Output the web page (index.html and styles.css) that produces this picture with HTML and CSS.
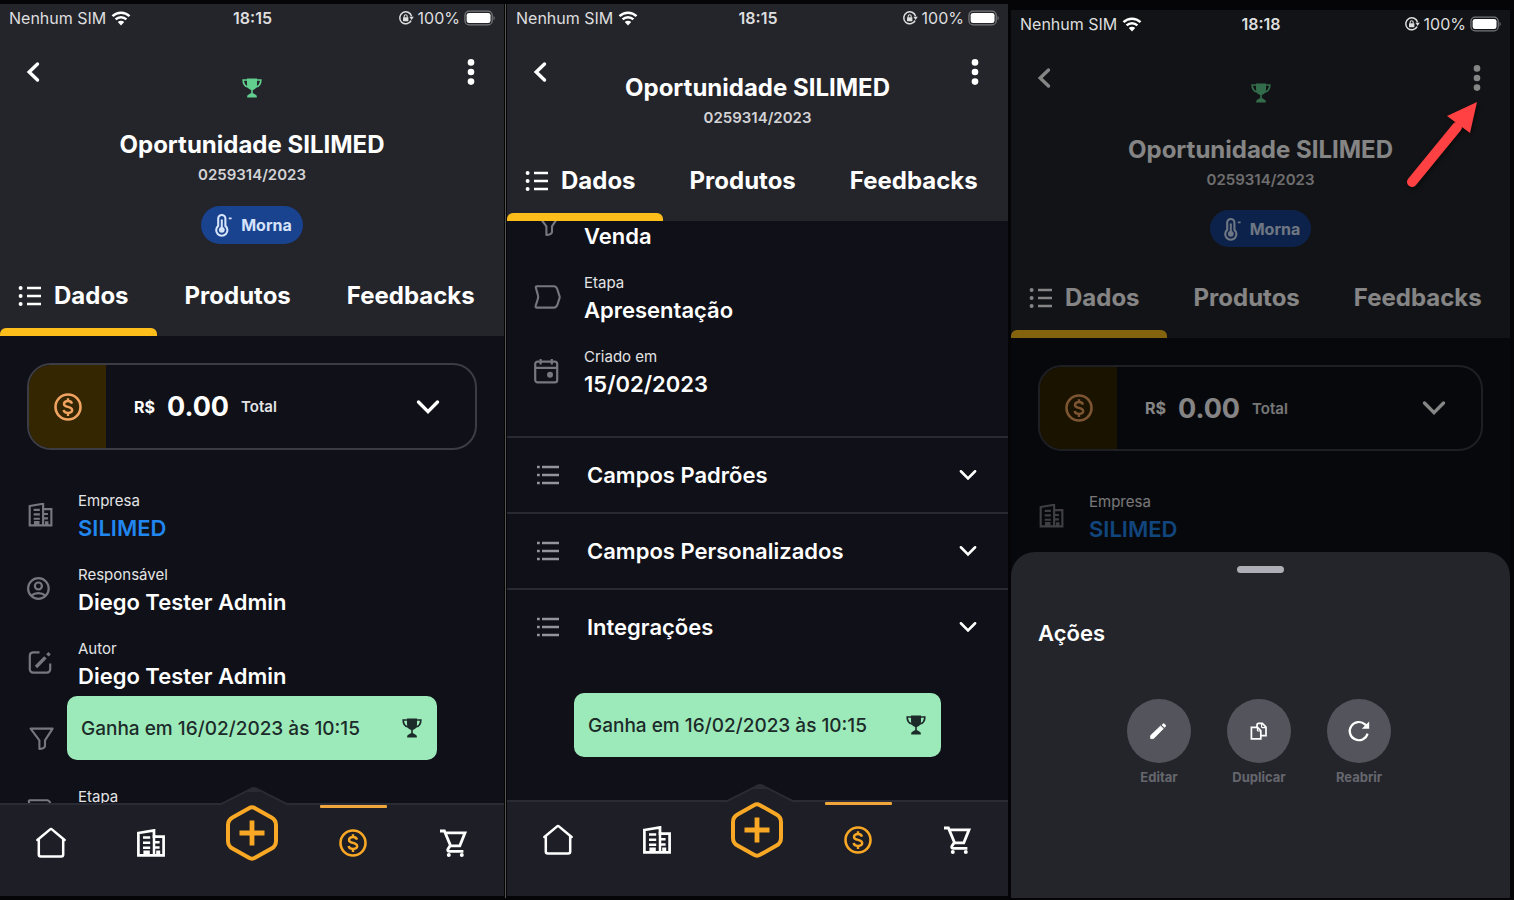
FILE: index.html
```html
<!DOCTYPE html>
<html lang="pt-BR">
<head>
<meta charset="utf-8">
<meta name="viewport" content="width=device-width, initial-scale=1">
<title>Oportunidade SILIMED</title>
<link rel="stylesheet" href="styles.css">
</head>
<body>
<svg class="sprite" aria-hidden="true">
  <symbol id="i-wifi" viewBox="0 0 20 16">
    <path d="M1.5 6.2a12.2 12.2 0 0 1 17 0M4.6 9.4a7.8 7.8 0 0 1 10.8 0" fill="none" stroke="currentColor" stroke-width="2.5"/>
    <path d="M10 15.4 6.8 12a4.6 4.6 0 0 1 6.4 0z" fill="currentColor"/>
  </symbol>
  <symbol id="i-lock" viewBox="0 0 16 16">
    <path d="M13.1 10.6A6 6 0 1 1 13.6 6.4" fill="none" stroke="currentColor" stroke-width="1.5"/>
    <path d="M11.4 6.8h4.4l-2.2 3.2z" fill="currentColor"/>
    <rect x="5" y="7.2" width="5.4" height="4" rx=".6" fill="currentColor"/>
    <path d="M6.2 7.4V6.2a1.500 1.500 0 0 1 3 0v1.200" fill="none" stroke="currentColor" stroke-width="1.100"/>
  </symbol>
  <symbol id="i-battery" viewBox="0 0 34 16">
    <rect x="1" y=".8" width="29" height="14.4" rx="4.4" fill="none" stroke="#77787c" stroke-width="1.3"/>
    <rect x="2.8" y="2.6" width="25.4" height="10.8" rx="2.6" fill="currentColor"/>
    <path d="M31.4 5.6c1.6.7 1.6 4.1 0 4.800z" fill="#77787c"/>
  </symbol>
  <symbol id="i-back" viewBox="0 0 16 22">
    <path d="M12.5 3 4.2 11l8.3 8" fill="none" stroke="currentColor" stroke-width="3.4" stroke-linecap="round"/>
  </symbol>
  <symbol id="i-dots" viewBox="0 0 8 28">
    <circle cx="4" cy="4.4" r="3.3" fill="currentColor"/><circle cx="4" cy="14" r="3.3" fill="currentColor"/><circle cx="4" cy="23.6" r="3.3" fill="currentColor"/>
  </symbol>
  <symbol id="i-trophy" viewBox="0 0 20 20">
    <path d="M5 .4h10v5.9c0 3.4-1.900 5.300-4.200 5.700v3.200c1.500.4 2.800 1.200 3.600 2.300h.4v2H5.200v-2h.4c.8-1.100 2.100-1.900 3.600-2.300V12C6.900 11.600 5 9.700 5 6.300z" fill="currentColor"/>
    <path d="M5.400 2H1.200c0 4.200 1.600 6.400 5 6.900M14.600 2h4.200c0 4.200-1.600 6.400-5 6.900" fill="none" stroke="currentColor" stroke-width="1.700"/>
  </symbol>
  <symbol id="i-thermo" viewBox="0 0 20 24">
    <path d="M5.200 12.900V5.600a3.600 3.600 0 0 1 7.200 0v7.300a5.600 5.600 0 1 1-7.200 0z" fill="none" stroke="currentColor" stroke-width="2.100"/>
    <circle cx="8.800" cy="16.800" r="2.900" fill="currentColor"/>
    <path d="M8.800 16V7.200" stroke="currentColor" stroke-width="2" stroke-linecap="round"/>
    <path d="M15.800 5.400h2.800" stroke="currentColor" stroke-width="1.800"/>
  </symbol>
  <symbol id="i-list" viewBox="0 0 24 22">
    <path d="M9 3h14M9 11h14M9 19h14" stroke="currentColor" stroke-width="2.700"/>
    <circle cx="2.600" cy="3" r="2" fill="currentColor"/><circle cx="2.600" cy="11" r="2" fill="currentColor"/><circle cx="2.600" cy="19" r="2" fill="currentColor"/>
  </symbol>
  <symbol id="i-rows" viewBox="0 0 24 22">
    <path d="M6 3h17M6 11h17M6 19h17" stroke="currentColor" stroke-width="2.600"/>
    <path d="M1 3h2.800M1 11h2.800M1 19h2.800" stroke="currentColor" stroke-width="2.600"/>
  </symbol>
  <symbol id="i-chevron" viewBox="0 0 24 16">
    <path d="m2.500 3 9.500 9.600L21.500 3" fill="none" stroke="currentColor" stroke-width="3.400" stroke-linecap="round"/>
  </symbol>
  <symbol id="i-coin" viewBox="0 0 28 28">
    <circle cx="14" cy="14" r="12.500" fill="none" stroke="currentColor" stroke-width="2.600"/>
    <path d="M18 10.600c-.5-1.700-2-2.600-4-2.600-2.300 0-4 1.100-4 2.900 0 4.200 8.200 1.900 8.200 6.200 0 1.800-1.800 2.900-4.200 2.900s-4-1-4.400-2.900M14 5.200v3M14 20v2.900" fill="none" stroke="currentColor" stroke-width="2.400"/>
  </symbol>
  <symbol id="i-building" viewBox="0 0 28 28">
    <path d="M1.400 4 17 1.400V7.600h9.600v18.800H1.400z" fill="none" stroke="currentColor" stroke-width="2.700"/>
    <path d="M17 6v20M6 8.400h7.200M6 13.700h7.200M6 18.800h7.200M18 13.200h4.600M18 18.400h4.600" stroke="currentColor" stroke-width="2.500"/>
    <path d="M6.400 26v-4.600h6.400V26M19.200 26v-4.400h4V26z" fill="currentColor"/>
  </symbol>
  <symbol id="i-office" viewBox="0 0 28 28">
    <g transform="translate(1.500 -.4) scale(.86)">
    <path d="M1.400 4 17 1.400V7.600h9.600v18.800H1.400z" fill="none" stroke="currentColor" stroke-width="2.500"/>
    <path d="M17 6v20M6 8.400h7.200M6 13.700h7.200M6 18.800h7.200M18 13.200h4.600M18 18.400h4.600" stroke="currentColor" stroke-width="2.500"/>
    <path d="M6.400 26v-4.600h6.400V26M19.200 26v-4.400h4V26z" fill="currentColor"/></g>
  </symbol>
  <symbol id="i-person" viewBox="0 0 28 28">
    <g fill="none" stroke="currentColor" stroke-width="2.200">
    <circle cx="11.400" cy="11.500" r="10.300"/><circle cx="11.400" cy="9" r="3.500"/><path d="M4.200 18.600c4.200-3.400 10.200-3.400 14.400 0"/></g>
  </symbol>
  <symbol id="i-edit" viewBox="0 0 28 28">
    <path d="M12.500 1.400H6A3.400 3.400 0 0 0 2.800 4.800v13.400a3.400 3.400 0 0 0 3.400 3.400h13.600a3.400 3.400 0 0 0 3.400-3.400v-5.600" fill="none" stroke="currentColor" stroke-width="2.200"/>
    <path d="m9 16 9.400-9.600M20.400 4.400l2.200-2.300" stroke="currentColor" stroke-width="3.400"/>
  </symbol>
  <symbol id="i-funnel" viewBox="0 0 28 28">
    <path d="M3.600 3.600h22L18 15.400V21c0 1.500-2.600 3-5.600 3v-8.600z" fill="none" stroke="currentColor" stroke-width="2.100" stroke-linejoin="round"/>
  </symbol>
  <symbol id="i-stage" viewBox="0 0 28 28">
    <path d="M3 1.200h17c2 0 2.600 1 3.200 2.800l2.400 7.400c.2.600.2.900 0 1.500l-2.200 6.800c-.7 2-1.600 2.900-3.400 2.900H3c-1.400 0-1.800-1-1.200-2.200l2-6.400c.6-1.800.6-2.600 0-4.400L2 3.300c-.4-1.300-.2-2.100 1-2.100z" fill="none" stroke="currentColor" stroke-width="2.100"/>
  </symbol>
  <symbol id="i-calendar" viewBox="0 0 28 28">
    <rect x="1.200" y="2.600" width="22" height="20.800" rx="2.400" fill="none" stroke="currentColor" stroke-width="2.200"/>
    <path d="M1.400 8.800H23M6.600-.2v5.600M17.800-.2v5.600" stroke="currentColor" stroke-width="2.200"/>
    <circle cx="16" cy="15.800" r="3" fill="currentColor"/>
  </symbol>
  <symbol id="i-home" viewBox="0 0 32 32">
    <path d="M3.400 13 15.800 2.600a1.800 1.800 0 0 1 2.400 0L30.600 13M4.800 12.600V27.600a2 2 0 0 0 2 2h20.400a2 2 0 0 0 2-2V12.600" fill="none" stroke="currentColor" stroke-width="2.500" stroke-linecap="round"/>
  </symbol>
  <symbol id="i-plus" viewBox="0 0 54 56">
    <path d="M24 3.200q3-1.700 6 0l16.500 9.200Q51 15 51 20v16q0 5-4.500 7.600L30 52.800q-3 1.700-6 0L7.500 43.600Q3 41 3 36V20q0-5 4.500-7.600z" fill="none" stroke="currentColor" stroke-width="4"/>
    <path d="M14.500 28h25M27 15.500v25" stroke="currentColor" stroke-width="4.800"/>
  </symbol>
  <symbol id="i-cart" viewBox="0 0 28 28">
    <path d="M0 2h4.400l6.200 14.800h9.200L25 3.800H5.400M10.400 16.400 8 20c-.8 1.400 0 2.400 1.400 2.400h14" fill="none" stroke="currentColor" stroke-width="2.800"/>
    <circle cx="8.800" cy="26" r="2" fill="currentColor"/><circle cx="21.800" cy="26" r="2" fill="currentColor"/>
  </symbol>
  <symbol id="i-hump" viewBox="0 0 70 20">
    <path d="M0 20 33 2.400q2-1 4 0L70 20z" fill="#1e1e26"/>
    <path d="M0 19 33 2.400q2-1 4 0L70 19" fill="none" stroke="#2a2b34" stroke-width="2"/>
    <path d="M28 6 35 2l7 4z" fill="#2a2b34"/>
  </symbol>
  <symbol id="i-pencil" viewBox="0 0 24 24">
    <path d="M3.600 16.600 13.600 7l2.700 2.700-9.700 9.900h-3z" fill="currentColor" stroke="currentColor" stroke-width=".8" stroke-linejoin="round"/>
    <path d="m14.600 6 1.300-1.300q.8-.7 1.600 0l1.200 1.200q.7.800 0 1.600L17.400 8.800z" fill="currentColor"/>
  </symbol>
  <symbol id="i-copy" viewBox="0 0 24 24">
    <path d="M4.400 8.400h6.200l3.200 3.200v8.200H4.400zM10 8V6.200q0-1.800 1.600-1.800h3.800l3.600 3.800v8.400h-4.600" fill="none" stroke="currentColor" stroke-width="1.700"/>
    <path d="M14.600 4.400v3.400q0 .8.800.8h3.200M10.400 8.800v2.400q0 .8.800.8h2.400" fill="none" stroke="currentColor" stroke-width="1.200"/>
  </symbol>
  <symbol id="i-redo" viewBox="0 0 24 24">
    <path d="M20.600 14.600A9.100 9.100 0 1 1 18 5.400L20 7.400" fill="none" stroke="currentColor" stroke-width="2.200"/>
    <path d="M22.200 2.400v7.400h-7.400z" fill="currentColor"/>
  </symbol>
</svg>

<div class="board">
  <section class="phone phone-first" aria-label="Dados da oportunidade">
    <header class="header">
      <div class="status">
        <span class="carrier">Nenhum SIM <svg class="wifi"><use href="#i-wifi"/></svg></span>
        <span class="clock">18:15</span>
        <span class="power"><svg class="lock"><use href="#i-lock"/></svg>100%<svg class="battery"><use href="#i-battery"/></svg></span>
      </div>
      <div class="topbar">
        <button class="icon-button" type="button" aria-label="Voltar"><svg class="back"><use href="#i-back"/></svg></button>
        <div class="summary">
          <svg class="trophy"><use href="#i-trophy"/></svg>
          <h1 class="title">Oportunidade SILIMED</h1>
          <p class="number">0259314/2023</p>
          <span class="pill"><svg class="thermo"><use href="#i-thermo"/></svg>Morna</span>
        </div>
        <button class="icon-button" type="button" aria-label="Mais"><svg class="dots"><use href="#i-dots"/></svg></button>
      </div>
      <nav class="tabs">
        <button class="tab tab-active" type="button"><svg class="list"><use href="#i-list"/></svg>Dados</button>
        <button class="tab" type="button">Produtos</button>
        <button class="tab" type="button">Feedbacks</button>
      </nav>
    </header>
    <div class="main">
      <button class="total" type="button">
        <span class="total-icon"><svg class="coin"><use href="#i-coin"/></svg></span>
        <span class="currency">R$</span><span class="amount">0.00</span><span class="caption">Total</span>
        <svg class="total-chevron"><use href="#i-chevron"/></svg>
      </button>
      <div class="fields">
        <div class="field"><svg class="field-icon"><use href="#i-office"/></svg><div><p class="label">Empresa</p><a class="value value-link" href="#">SILIMED</a></div></div>
        <div class="field"><svg class="field-icon"><use href="#i-person"/></svg><div><p class="label">Responsável</p><p class="value">Diego Tester Admin</p></div></div>
        <div class="field"><svg class="field-icon"><use href="#i-edit"/></svg><div><p class="label">Autor</p><p class="value">Diego Tester Admin</p></div></div>
        <div class="field"><svg class="field-icon"><use href="#i-funnel"/></svg></div>
        <div class="field"><svg class="field-icon"><use href="#i-stage"/></svg><p class="label">Etapa</p></div>
      </div>
    </div>
    <footer class="dock">
      <div class="toast" role="status">Ganha em 16/02/2023 às 10:15<svg class="trophy"><use href="#i-trophy"/></svg></div>
      <nav class="navbar">
        <svg class="hump"><use href="#i-hump"/></svg>
        <button class="nav-item" type="button" aria-label="Início"><svg class="home"><use href="#i-home"/></svg></button>
        <button class="nav-item" type="button" aria-label="Empresas"><svg class="coin"><use href="#i-building"/></svg></button>
        <button class="nav-item nav-add" type="button" aria-label="Adicionar"><svg class="plus"><use href="#i-plus"/></svg></button>
        <button class="nav-item nav-active" type="button" aria-label="Oportunidades"><svg class="coin"><use href="#i-coin"/></svg></button>
        <button class="nav-item" type="button" aria-label="Vendas"><svg class="coin"><use href="#i-cart"/></svg></button>
      </nav>
    </footer>
  </section>

  <div class="divider"></div>

  <section class="phone phone-second" aria-label="Dados, continuação">
    <header class="header">
      <div class="status">
        <span class="carrier">Nenhum SIM <svg class="wifi"><use href="#i-wifi"/></svg></span>
        <span class="clock">18:15</span>
        <span class="power"><svg class="lock"><use href="#i-lock"/></svg>100%<svg class="battery"><use href="#i-battery"/></svg></span>
      </div>
      <div class="topbar">
        <button class="icon-button" type="button" aria-label="Voltar"><svg class="back"><use href="#i-back"/></svg></button>
        <div class="summary summary-compact">
          <h1 class="title">Oportunidade SILIMED</h1>
          <p class="number">0259314/2023</p>
        </div>
        <button class="icon-button" type="button" aria-label="Mais"><svg class="dots"><use href="#i-dots"/></svg></button>
      </div>
      <nav class="tabs">
        <button class="tab tab-active" type="button"><svg class="list"><use href="#i-list"/></svg>Dados</button>
        <button class="tab" type="button">Produtos</button>
        <button class="tab" type="button">Feedbacks</button>
      </nav>
    </header>
    <div class="main main-scrolled">
      <div class="fields">
        <div class="field"><svg class="field-icon"><use href="#i-funnel"/></svg><p class="value value-low">Venda</p></div>
        <div class="field"><svg class="field-icon"><use href="#i-stage"/></svg><div><p class="label">Etapa</p><p class="value">Apresentação</p></div></div>
        <div class="field"><svg class="field-icon"><use href="#i-calendar"/></svg><div><p class="label">Criado em</p><p class="value">15/02/2023</p></div></div>
      </div>
      <div class="groups">
        <button class="group" type="button"><svg class="list"><use href="#i-rows"/></svg>Campos Padrões<svg class="group-chevron"><use href="#i-chevron"/></svg></button>
        <button class="group" type="button"><svg class="list"><use href="#i-rows"/></svg>Campos Personalizados<svg class="group-chevron"><use href="#i-chevron"/></svg></button>
        <button class="group" type="button"><svg class="list"><use href="#i-rows"/></svg>Integrações<svg class="group-chevron"><use href="#i-chevron"/></svg></button>
      </div>
    </div>
    <footer class="dock">
      <div class="toast" role="status">Ganha em 16/02/2023 às 10:15<svg class="trophy"><use href="#i-trophy"/></svg></div>
      <nav class="navbar">
        <svg class="hump"><use href="#i-hump"/></svg>
        <button class="nav-item" type="button" aria-label="Início"><svg class="home"><use href="#i-home"/></svg></button>
        <button class="nav-item" type="button" aria-label="Empresas"><svg class="coin"><use href="#i-building"/></svg></button>
        <button class="nav-item nav-add" type="button" aria-label="Adicionar"><svg class="plus"><use href="#i-plus"/></svg></button>
        <button class="nav-item nav-active" type="button" aria-label="Oportunidades"><svg class="coin"><use href="#i-coin"/></svg></button>
        <button class="nav-item" type="button" aria-label="Vendas"><svg class="coin"><use href="#i-cart"/></svg></button>
      </nav>
    </footer>
  </section>

  <section class="phone phone-third" aria-label="Ações da oportunidade">
    <header class="header">
      <div class="status">
        <span class="carrier">Nenhum SIM <svg class="wifi"><use href="#i-wifi"/></svg></span>
        <span class="clock">18:18</span>
        <span class="power"><svg class="lock"><use href="#i-lock"/></svg>100%<svg class="battery"><use href="#i-battery"/></svg></span>
      </div>
      <div class="topbar">
        <button class="icon-button" type="button" aria-label="Voltar"><svg class="back"><use href="#i-back"/></svg></button>
        <div class="summary">
          <svg class="trophy"><use href="#i-trophy"/></svg>
          <h1 class="title">Oportunidade SILIMED</h1>
          <p class="number">0259314/2023</p>
          <span class="pill"><svg class="thermo"><use href="#i-thermo"/></svg>Morna</span>
        </div>
        <button class="icon-button" type="button" aria-label="Mais"><svg class="dots"><use href="#i-dots"/></svg></button>
      </div>
      <nav class="tabs">
        <button class="tab tab-active" type="button"><svg class="list"><use href="#i-list"/></svg>Dados</button>
        <button class="tab" type="button">Produtos</button>
        <button class="tab" type="button">Feedbacks</button>
      </nav>
    </header>
    <div class="main">
      <button class="total" type="button">
        <span class="total-icon"><svg class="coin"><use href="#i-coin"/></svg></span>
        <span class="currency">R$</span><span class="amount">0.00</span><span class="caption">Total</span>
        <svg class="total-chevron"><use href="#i-chevron"/></svg>
      </button>
      <div class="fields">
        <div class="field"><svg class="field-icon"><use href="#i-office"/></svg><div><p class="label">Empresa</p><a class="value value-link" href="#">SILIMED</a></div></div>
      </div>
    </div>
    <div class="scrim"></div>
    <div class="sheet" role="dialog" aria-labelledby="sheet-title">
      <div class="handle"></div>
      <h2 class="sheet-title" id="sheet-title">Ações</h2>
      <div class="actions">
        <button class="action" type="button"><span class="action-disc"><svg class="glyph"><use href="#i-pencil"/></svg></span>Editar</button>
        <button class="action" type="button"><span class="action-disc"><svg class="glyph"><use href="#i-copy"/></svg></span>Duplicar</button>
        <button class="action" type="button"><span class="action-disc"><svg class="glyph"><use href="#i-redo"/></svg></span>Reabrir</button>
      </div>
    </div>
    <svg class="arrow" viewBox="0 0 76 92" aria-hidden="true">
      <path d="M7 84 52 29" stroke="#ff4144" stroke-width="10" stroke-linecap="round"/>
      <path d="M72 4 42 18l23 17z" fill="#ff4144"/>
    </svg>
  </section>
</div>
</body>
</html>
```

FILE: styles.css
```css
* {
  box-sizing: border-box;
}

body {
  margin: 0;
  background: #050507;
  color: #fff;
  font-family: Inter, "Liberation Sans", sans-serif;
}

h1, h2, p {
  margin: 0;
}

button {
  margin: 0;
  padding: 0;
  border: 0;
  background: none;
  color: inherit;
  font: inherit;
  text-align: left;
}

.sprite {
  display: none;
}

svg {
  display: block;
  flex: none;
}

.board {
  display: flex;
  min-height: 100vh;
  padding: 4px 4px 2px 0;
}

.divider {
  width: 1px;
  margin: 0 1px;
  background: #55564f;
}

.phone {
  position: relative;
  display: flex;
  flex-direction: column;
  min-width: 0;
  margin-bottom: 2px;
  overflow: hidden;
  background: #0f1018;
}

.phone-first {
  flex: 504 1 0;
}

.phone-second {
  flex: 501 1 0;
}

.phone-third {
  flex: 499 1 0;
  margin: 6px 0 0 3px;
}

/* Header */

.header {
  background: #24252b;
}

.status {
  display: grid;
  grid-template-columns: 1fr auto 1fr;
  align-items: center;
  height: 28px;
  padding: 0 8px 0 9px;
  color: #dededf;
  font-size: 16px;
  line-height: 20px;
}

.carrier,
.power {
  display: flex;
  align-items: center;
  gap: 5px;
}

.power {
  justify-content: flex-end;
  gap: 4px;
}

.clock {
  font-weight: 600;
}

.wifi {
  width: 20px;
  height: 16px;
  color: #fff;
}

.lock {
  width: 16px;
  height: 16px;
}

.battery {
  width: 32px;
  height: 16px;
  color: #fff;
}

.topbar {
  display: grid;
  grid-template-columns: 66px 1fr 66px;
  align-items: start;
  padding: 18px 0 15px;
}

.phone-second .topbar {
  padding-bottom: 16px;
}

.icon-button {
  display: flex;
  align-items: center;
  justify-content: center;
  height: 44px;
}

.back {
  width: 16px;
  height: 22px;
}

.dots {
  width: 8px;
  height: 28px;
}

.summary {
  display: flex;
  flex-direction: column;
  align-items: center;
  padding-top: 28px;
}

.trophy {
  width: 20px;
  height: 20px;
}

.summary .trophy {
  margin-bottom: 31px;
  color: #62cf8e;
}

.summary-compact {
  padding-top: 22px;
}

.title {
  font-size: 24px;
  font-weight: 700;
  line-height: 32px;
  white-space: nowrap;
}

.number {
  margin-top: 4px;
  color: #d3d3d5;
  font-size: 15px;
  font-weight: 600;
  line-height: 20px;
}

.pill {
  display: flex;
  align-items: center;
  gap: 8px;
  height: 38px;
  margin-top: 21px;
  padding: 0 11px 0 12px;
  border-radius: 19px;
  background: #19428f;
  color: #d5e3fb;
  font-size: 16px;
  font-weight: 700;
}

.thermo {
  width: 20px;
  height: 24px;
}

.tabs {
  display: flex;
  height: 77px;
}

.tab {
  position: relative;
  display: flex;
  align-items: center;
  gap: 12px;
  padding: 0 27px 4px;
  font-size: 24px;
  font-weight: 700;
  line-height: 32px;
}

.phone-first .tab {
  padding-right: 28px;
  padding-left: 28px;
}

.phone-first .tab-active,
.tab-active {
  padding-left: 18px;
}

.tab-active::after {
  position: absolute;
  right: 0;
  bottom: 0;
  left: 0;
  height: 8px;
  border-radius: 6px 6px 0 0;
  background: #fdbe1b;
  content: "";
}

.list {
  width: 24px;
  height: 22px;
}

/* Content */

.main {
  flex: 1 1 0;
  min-height: 0;
  padding-top: 27px;
  overflow: hidden;
}

.main-scrolled {
  padding-top: 0;
}

.main-scrolled .fields {
  margin-top: -22px;
}

.total {
  display: flex;
  align-items: center;
  width: calc(100% - 54px);
  height: 86px;
  margin: 0 27px 41px;
  overflow: hidden;
  border: 2px solid #3b3c44;
  border-radius: 24px;
}

.phone-first .total {
  height: 87px;
}

.total-icon {
  display: flex;
  align-items: center;
  justify-content: center;
  align-self: stretch;
  width: 77px;
  margin-right: 28px;
  background: #332601;
  color: #f1a462;
}

.coin {
  width: 28px;
  height: 28px;
}

.currency {
  font-size: 16px;
  font-weight: 700;
}

.amount {
  margin: 0 12px;
  font-size: 27px;
  font-weight: 700;
}

.caption {
  color: #e4e4e6;
  font-size: 15px;
  font-weight: 600;
}

.total-chevron {
  width: 24px;
  height: 16px;
  margin: 0 35px 0 auto;
}

.fields {
  display: grid;
  gap: 23px;
  padding: 0 27px;
}

.field {
  display: grid;
  grid-template-columns: 28px 1fr;
  gap: 22px;
  height: 51px;
}

.phone-first .field,
.phone-third .field {
  gap: 23px;
}

.field-icon {
  align-self: center;
  width: 28px;
  height: 28px;
  color: #777780;
}

.label {
  color: #e4e4e6;
  font-size: 15px;
  line-height: 20px;
}

.value {
  display: block;
  margin-top: 3px;
  font-size: 22px;
  font-weight: 600;
  line-height: 28px;
}

.value-low {
  align-self: end;
}

.value-link {
  color: #2186ee;
  text-decoration: none;
}

.groups {
  margin-top: 38px;
}

.group {
  display: flex;
  align-items: center;
  gap: 27px;
  width: 100%;
  height: 76px;
  padding: 0 31px 0 29px;
  border-top: 2px solid #282932;
  font-size: 22px;
  font-weight: 600;
  line-height: 28px;
}

.group .list {
  color: #94949b;
}

.group-chevron {
  width: 18px;
  height: 12px;
  margin-left: auto;
}

/* Bottom bar */

.dock {
  position: relative;
}

.toast {
  position: absolute;
  right: 67px;
  bottom: calc(100% + 44px);
  left: 67px;
  display: flex;
  align-items: center;
  justify-content: space-between;
  height: 64px;
  padding: 0 15px 0 14px;
  border-radius: 10px;
  background: #9ceaba;
  color: #1c2a29;
  font-size: 19px;
  font-weight: 500;
}

.navbar {
  display: grid;
  grid-template-columns: repeat(5, 1fr);
  align-items: start;
  height: 92px;
  background: #1e1e26;
  box-shadow: 0 -1px 0 #2a2b34, inset 0 1px 0 #2a2b34;
}

.phone-second .navbar {
  height: 95px;
}

.hump {
  position: absolute;
  bottom: calc(100% - 2px);
  left: calc(50% - 33px);
  width: 70px;
  height: 20px;
}

.nav-item {
  position: relative;
  display: flex;
  align-items: center;
  justify-content: center;
  height: 78px;
}

.nav-add {
  align-items: flex-start;
  padding-top: 1px;
}

.nav-add,
.nav-active {
  color: #f9a825;
}

.nav-active::before {
  position: absolute;
  top: 1px;
  left: calc(50% - 33px);
  width: 67px;
  height: 3px;
  border-radius: 1px;
  background: #f0a63a;
  content: "";
}

.home {
  width: 32px;
  height: 32px;
}

.plus {
  width: 54px;
  height: 56px;
}

/* Action sheet */

.phone-third .summary {
  padding-top: 27px;
}

.phone-third .topbar {
  padding-bottom: 14px;
}

.phone-third .pill {
  height: 37px;
  margin-top: 20px;
}

.phone-third .status {
  position: relative;
  z-index: 2;
}

.scrim {
  position: absolute;
  inset: 0;
  z-index: 1;
  background: rgba(0, 0, 0, 0.48);
}

.sheet {
  position: absolute;
  right: 0;
  bottom: 0;
  left: 0;
  z-index: 3;
  min-height: 346px;
  padding: 14px 27px 0;
  border-radius: 24px 24px 0 0;
  background: #24252b;
}

.handle {
  width: 47px;
  height: 7px;
  margin: 0 auto 44px;
  border-radius: 4px;
  background: #aeaeb6;
}

.sheet-title {
  font-size: 22px;
  font-weight: 600;
  line-height: 32px;
}

.actions {
  display: flex;
  justify-content: center;
  gap: 36px;
  margin-top: 50px;
  padding-right: 3px;
}

.action {
  display: flex;
  flex-direction: column;
  align-items: center;
  gap: 5px;
  width: 64px;
  color: #66676e;
  font-size: 13px;
  font-weight: 700;
  line-height: 18px;
}

.action-disc {
  display: flex;
  align-items: center;
  justify-content: center;
  width: 64px;
  height: 64px;
  border-radius: 50%;
  background: #54545c;
  color: #fff;
}

.glyph {
  width: 24px;
  height: 24px;
}

.arrow {
  position: absolute;
  top: 88px;
  right: 29px;
  z-index: 4;
  width: 76px;
  height: 92px;
  filter: drop-shadow(1px 2px 2px rgba(0, 0, 0, 0.5));
}
```
